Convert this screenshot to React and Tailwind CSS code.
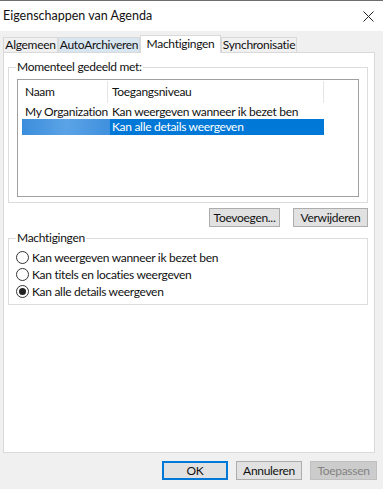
import React from 'react';

const font = { fontFamily: 'Lato, "Noto Sans", sans-serif' };

function Radio({ checked, label }) {
  return (
    <div className="flex items-center h-[17px]">
      <span className="w-[13px] h-[13px] rounded-full border border-[#333] bg-white flex items-center justify-center">
        {checked && <span className="w-[7px] h-[7px] rounded-full bg-[#222]" />}
      </span>
      <span className="ml-[3px] text-[#111]">{label}</span>
    </div>
  );
}

function Btn({ children, w, variant }) {
  const styles = {
    normal: 'bg-[#e1e1e1] border border-[#adadad] text-[#111]',
    default: 'bg-[#e1e1e1] border-2 border-[#0078d7] text-[#111]',
    disabled: 'bg-[#cccccc] border border-[#bfbfbf] text-[#838383]',
  };
  return (
    <button className={`${w} h-[19px] flex items-center justify-center leading-none whitespace-nowrap ${styles[variant || 'normal']}`}>
      {children}
    </button>
  );
}

export default function App() {
  const tabs = [
    { label: 'Algemeen', w: 'w-[55px]', cls: 'bg-[#f0f0f0] border border-b-0 border-[#d9d9d9] h-[15px]' },
    { label: 'AutoArchiveren', w: 'w-[82px]', cls: 'bg-[#d8e6f2] border border-b-0 border-[#d9d9d9] h-[15px]' },
    { label: 'Machtigingen', w: 'w-[81px]', cls: 'bg-white border border-b-0 border-[#d9d9d9] h-[18px] -mb-px relative z-10', active: true },
    { label: 'Synchronisatie', w: 'w-[76px]', cls: 'bg-[#f0f0f0] border border-b-0 border-[#d9d9d9] h-[15px]' },
  ];

  return (
    <div className="w-[383px] h-[489px] bg-[#f0f0f0] flex flex-col text-[12px] tracking-[-0.3px] text-[#111] overflow-hidden" style={font}>
      {/* Title bar */}
      <div className="h-px bg-[#6e6e6e]" />
      <div className="h-[30px] bg-white flex items-center justify-between pl-[3px] pr-[8px]">
        <span className="text-[12.5px] tracking-normal text-[#111]">Eigenschappen van Agenda</span>
        <svg width="11" height="11" viewBox="0 0 11 11" className="mr-[1px]">
          <path d="M0.5 0.5 L10.5 10.5 M10.5 0.5 L0.5 10.5" stroke="#222" strokeWidth="1" />
        </svg>
      </div>

      {/* Tabs */}
      <div className="h-[21px] flex items-end pl-[3px]">
        {tabs.map(t => (
          <div key={t.label} className={`${t.w} ${t.cls} flex items-center justify-center leading-none whitespace-nowrap`}>
            <span className={t.active ? '-mt-[2px]' : ''}>{t.label}</span>
          </div>
        ))}
      </div>

      {/* Tab page */}
      <div className="ml-[3px] w-[372px] h-[401px] bg-white border border-[#d9d9d9] pl-[4px] pt-[6px]">
        {/* Shared with */}
        <fieldset className="w-[360px] border border-[#dcdcdc] px-[8px] pb-[5px]">
          <legend className="px-[1px] -ml-px leading-[16px]">Momenteel gedeeld met:</legend>
          <div className="mt-[4px] h-[118px] border border-[#a0a0a0] bg-white">
            <div className="flex h-[24px] items-center">
              <div className="w-[90px] h-[22px] flex items-center pl-[7px] border-r border-[#e5e5e5]">Naam</div>
              <div className="w-[216px] h-[22px] flex items-center pl-[4px] border-r border-[#e5e5e5]">Toegangsniveau</div>
            </div>
            <div className="flex h-[15px] items-center">
              <div className="w-[90px] pl-[7px] whitespace-nowrap">My Organization</div>
              <div className="pl-[4px] whitespace-nowrap">Kan weergeven wanneer ik bezet ben</div>
            </div>
            <div className="flex h-[16px] items-stretch pl-[4px]">
              <div className="w-[88px] bg-gradient-to-r from-[#3a8ddc] via-[#5ba3e6] to-[#3f90de]" />
              <div className="w-[214px] bg-[#0078d7] text-white flex items-center pl-[2px] whitespace-nowrap">Kan alle details weergeven</div>
            </div>
          </div>
        </fieldset>

        <div className="w-[360px] flex justify-end gap-[13px] mt-[5px]">
          <Btn w="w-[71px]">Toevoegen...</Btn>
          <Btn w="w-[75px]">Verwijderen</Btn>
        </div>

        {/* Permissions */}
        <fieldset className="w-[360px] mt-[3px] border border-[#dcdcdc] px-[7px] pb-[4px]">
          <legend className="px-[1px] leading-[16px]">Machtigingen</legend>
          <div className="flex flex-col pt-[3px]">
            <Radio label="Kan weergeven wanneer ik bezet ben" />
            <Radio label="Kan titels en locaties weergeven" />
            <Radio checked label="Kan alle details weergeven" />
          </div>
        </fieldset>
      </div>

      {/* Dialog buttons */}
      <div className="flex justify-end gap-[8px] pr-[6px] mt-[8px]">
        <Btn w="w-[66px]" variant="default">OK</Btn>
        <Btn w="w-[66px]">Annuleren</Btn>
        <Btn w="w-[67px]" variant="disabled">Toepassen</Btn>
      </div>
    </div>
  );
}
